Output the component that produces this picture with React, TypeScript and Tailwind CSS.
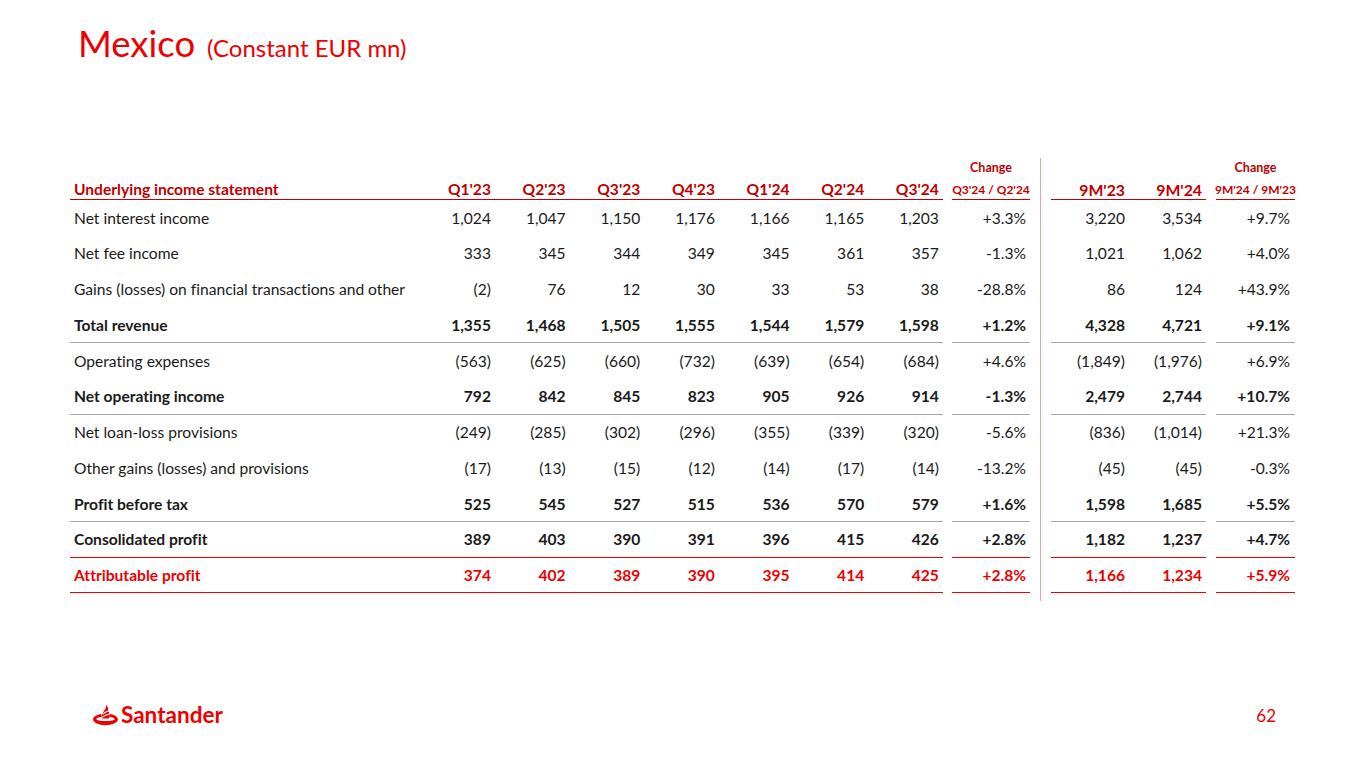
import React from 'react';

type Row = {
  label: string;
  q: string[];
  chg: string;
  nine: string[];
  chg9: string;
  bold?: boolean;
  red?: boolean;
  line?: 'gray' | 'red';
};

const rows: Row[] = [
  { label: 'Net interest income', q: ['1,024', '1,047', '1,150', '1,176', '1,166', '1,165', '1,203'], chg: '+3.3%', nine: ['3,220', '3,534'], chg9: '+9.7%' },
  { label: 'Net fee income', q: ['333', '345', '344', '349', '345', '361', '357'], chg: '-1.3%', nine: ['1,021', '1,062'], chg9: '+4.0%' },
  { label: 'Gains (losses) on financial transactions and other', q: ['(2)', '76', '12', '30', '33', '53', '38'], chg: '-28.8%', nine: ['86', '124'], chg9: '+43.9%' },
  { label: 'Total revenue', q: ['1,355', '1,468', '1,505', '1,555', '1,544', '1,579', '1,598'], chg: '+1.2%', nine: ['4,328', '4,721'], chg9: '+9.1%', bold: true, line: 'gray' },
  { label: 'Operating expenses', q: ['(563)', '(625)', '(660)', '(732)', '(639)', '(654)', '(684)'], chg: '+4.6%', nine: ['(1,849)', '(1,976)'], chg9: '+6.9%' },
  { label: 'Net operating income', q: ['792', '842', '845', '823', '905', '926', '914'], chg: '-1.3%', nine: ['2,479', '2,744'], chg9: '+10.7%', bold: true, line: 'gray' },
  { label: 'Net loan-loss provisions', q: ['(249)', '(285)', '(302)', '(296)', '(355)', '(339)', '(320)'], chg: '-5.6%', nine: ['(836)', '(1,014)'], chg9: '+21.3%' },
  { label: 'Other gains (losses) and provisions', q: ['(17)', '(13)', '(15)', '(12)', '(14)', '(17)', '(14)'], chg: '-13.2%', nine: ['(45)', '(45)'], chg9: '-0.3%' },
  { label: 'Profit before tax', q: ['525', '545', '527', '515', '536', '570', '579'], chg: '+1.6%', nine: ['1,598', '1,685'], chg9: '+5.5%', bold: true, line: 'gray' },
  { label: 'Consolidated profit', q: ['389', '403', '390', '391', '396', '415', '426'], chg: '+2.8%', nine: ['1,182', '1,237'], chg9: '+4.7%', bold: true, line: 'red' },
  { label: 'Attributable profit', q: ['374', '402', '389', '390', '395', '414', '425'], chg: '+2.8%', nine: ['1,166', '1,234'], chg9: '+5.9%', bold: true, red: true, line: 'red' },
];

const quarters = ["Q1'23", "Q2'23", "Q3'23", "Q4'23", "Q1'24", "Q2'24", "Q3'24"];

function Flame() {
  return (
    <svg width="25" height="22" viewBox="0 0 26 22" className="shrink-0">
      <path
        d="M0 15.2 C0.6 12.4 4.2 10.6 8.4 9.9 C8.5 11.2 8.9 12.2 9.4 13 C5.6 13.4 3.4 14.2 3.4 15.1 C3.4 16.4 7.8 17.3 13 17.3 C18.2 17.3 22.6 16.4 22.6 15.1 C22.6 14.2 20.4 13.4 16.6 13 C17.1 12.2 17.5 11.2 17.6 9.9 C21.8 10.6 25.4 12.4 26 15.2 C26 18.8 20.2 21.6 13 21.6 C5.8 21.6 0 18.8 0 15.2 Z"
        fill="#ec0000"
      />
      <path
        d="M9.6 14.6 C8.4 12.6 8.8 10.6 10.2 8.6 L12.6 5 C13.4 3.6 13.6 2 13.2 0.4 C15.6 2.2 16.4 4.6 15.6 6.8 C17.4 8.6 17.8 11.2 16.6 14.6 Z"
        fill="#ec0000"
      />
      <path d="M10 10.2 C11.8 8.6 13.6 7.8 15.6 6.8" stroke="#fff" strokeWidth="1.1" fill="none" />
      <path d="M9.4 13.4 C11.8 11.6 14.4 10.6 17.2 10" stroke="#fff" strokeWidth="1.1" fill="none" />
    </svg>
  );
}

function lineCls(line?: 'gray' | 'red') {
  if (line === 'gray') return 'border-b border-[#a6a6a6]';
  if (line === 'red') return 'border-b border-[#ec0000]';
  return 'border-b border-transparent';
}

export default function App() {
  return (
    <div
      className="w-[1365px] h-[768px] bg-white flex flex-col overflow-hidden [font-variant-ligatures:none]"
      style={{ fontFamily: 'Lato, "Open Sans", sans-serif' }}
    >
      <div className="pl-[78px] pt-[20px] flex items-baseline gap-[12px] text-[#ec0000]">
        <span className="text-[36.5px] leading-[46px]">Mexico</span>
        <span className="text-[24px]">(Constant EUR mn)</span>
      </div>

      <div className="mt-[90px] pl-[70px] flex flex-col">
        {/* change caption row */}
        <div className="flex h-[22px] items-center text-[12.5px] font-bold text-[#c00000] pt-[2px]">
          <div className="w-[873px]" />
          <div className="ml-[9px] w-[78px] text-center">Change</div>
          <div className="w-[21px] self-stretch flex justify-center"><div className="w-px bg-[#e9a6a6]" /></div>
          <div className="w-[155px]" />
          <div className="ml-[10px] w-[79px] text-center">Change</div>
        </div>

        {/* header row */}
        <div className="flex h-[22px] text-[#c00000] font-bold">
          <div className="w-[873px] flex items-center border-b border-[#c00000] text-[15.6px] pt-[2px]">
            <div className="w-[350.3px] pl-1">Underlying income statement</div>
            {quarters.map((q) => (
              <div key={q} className="w-[74.67px] text-right pr-1">{q}</div>
            ))}
          </div>
          <div className="ml-[9px] w-[78px] flex items-center justify-center border-b border-[#c00000] text-[12px] whitespace-nowrap pt-[2px]">
            Q3'24 / Q2'24
          </div>
          <div className="w-[21px] flex justify-center"><div className="w-px bg-[#e9a6a6]" /></div>
          <div className="w-[155px] flex items-center border-b border-[#c00000] text-[15.8px] pt-[2px]">
            <div className="w-[78px] text-right pr-1">9M'23</div>
            <div className="w-[77px] text-right pr-1">9M'24</div>
          </div>
          <div className="ml-[10px] w-[79px] flex items-center justify-center border-b border-[#c00000] text-[12px] whitespace-nowrap pt-[2px]">
            9M'24 / 9M'23
          </div>
        </div>

        {rows.map((r) => {
          const color = r.red ? 'text-[#ec0000]' : 'text-[#1a1a1a]';
          const weight = r.bold ? 'font-bold' : 'font-normal';
          const lc = lineCls(r.line);
          return (
            <div key={r.label} className={`flex h-[35.75px] text-[15.6px] ${color} ${weight}`}>
              <div className={`w-[873px] flex items-center pt-[2px] ${lc}`}>
                <div className="w-[350.3px] pl-1 whitespace-nowrap">{r.label}</div>
                {r.q.map((v, i) => (
                  <div key={i} className="w-[74.67px] text-right pr-1">{v}</div>
                ))}
              </div>
              <div className={`ml-[9px] w-[78px] flex items-center justify-end pr-1 pt-[2px] ${lc}`}>{r.chg}</div>
              <div className="w-[21px] flex justify-center"><div className="w-px bg-[#e9a6a6]" /></div>
              <div className={`w-[155px] flex items-center pt-[2px] ${lc}`}>
                <div className="w-[78px] text-right pr-1">{r.nine[0]}</div>
                <div className="w-[77px] text-right pr-1">{r.nine[1]}</div>
              </div>
              <div className={`ml-[10px] w-[79px] flex items-center justify-end pr-[5px] pt-[2px] ${lc}`}>{r.chg9}</div>
            </div>
          );
        })}
        <div className="flex h-[8px]">
          <div className="w-[960px]" />
          <div className="w-[21px] flex justify-center"><div className="w-px bg-[#e9a6a6]" /></div>
        </div>
      </div>

      <div className="mt-auto mb-[40px] pl-[93px] pr-[89px] flex items-center justify-between">
        <div className="flex items-center gap-[3px]">
          <Flame />
          <span className="text-[22.5px] leading-none text-[#ec0000] font-bold">Santander</span>
        </div>
        <span className="text-[17px] text-[#ec0000]">62</span>
      </div>
    </div>
  );
}
